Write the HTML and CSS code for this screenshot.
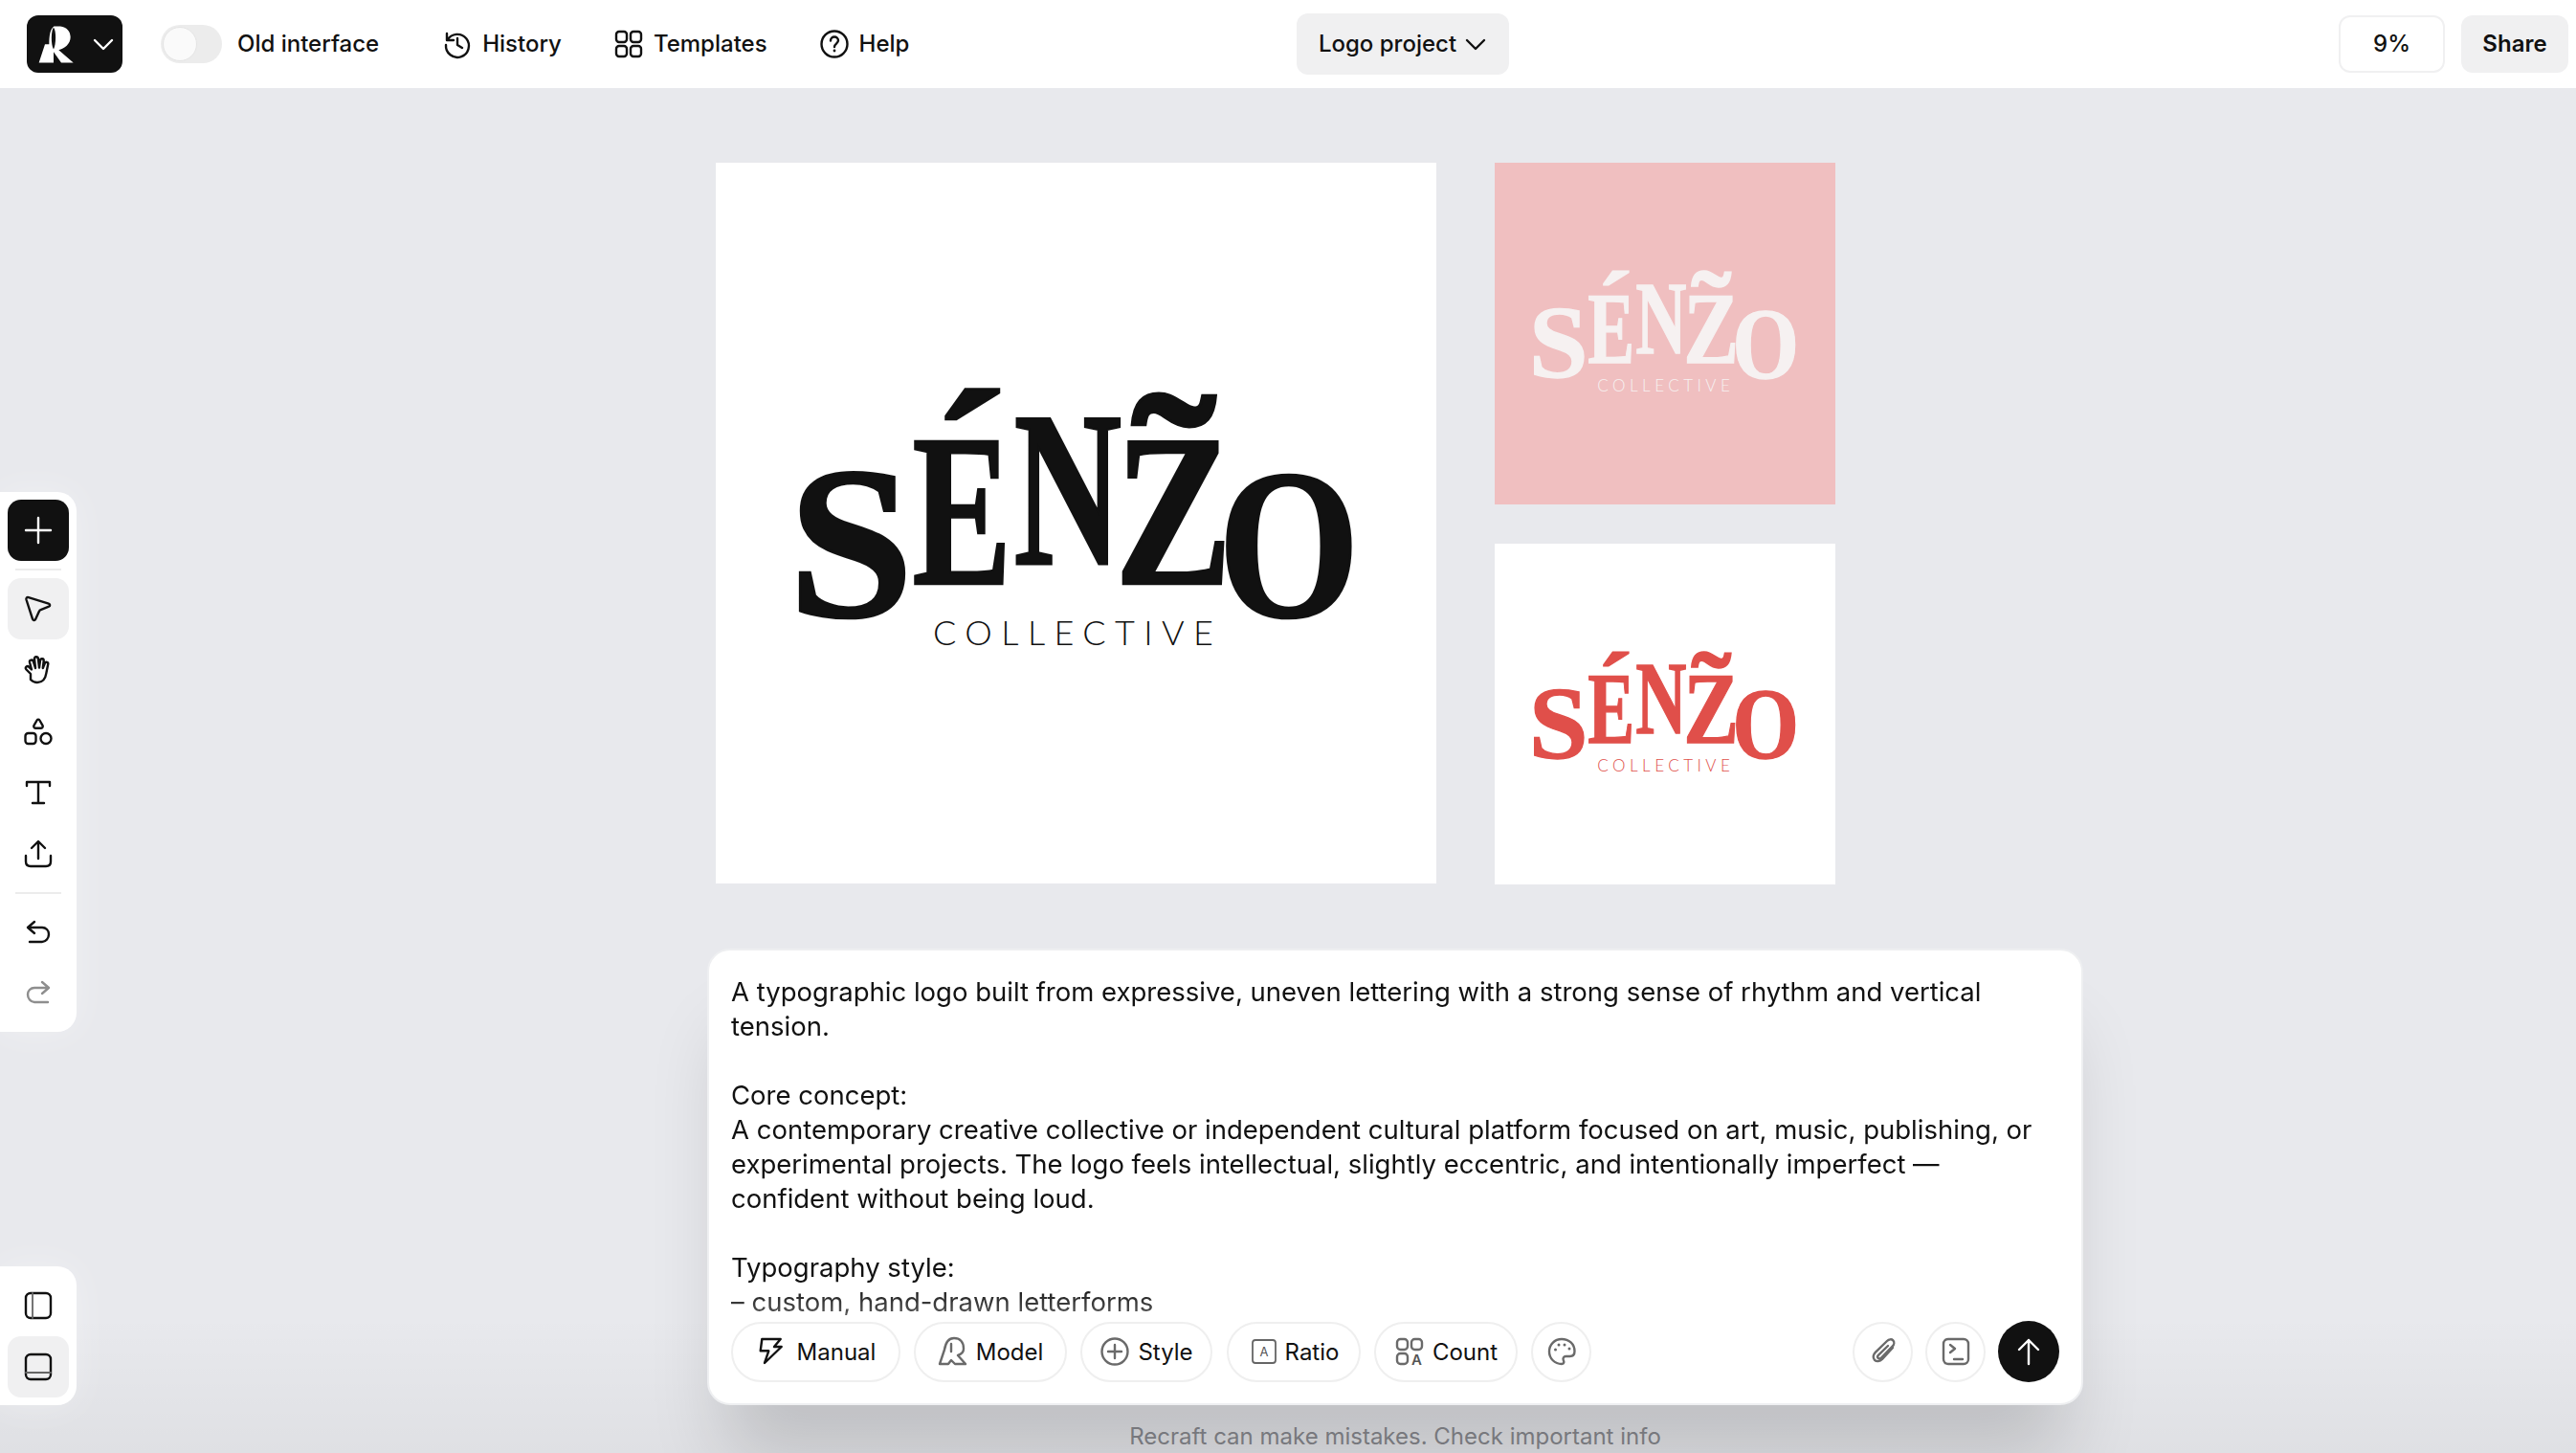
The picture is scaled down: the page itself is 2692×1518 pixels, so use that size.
FILE: index.html
```html
<!DOCTYPE html>
<html lang="en">
<head>
<meta charset="utf-8">
<title>Recraft – Logo project</title>
<link rel="stylesheet" href="styles.css">
</head>
<body>
<header class="topbar">
  <div class="top-left">
    <button class="brand">
      <svg class="brand-mark" viewBox="30 25 120 128"><path fill-rule="evenodd" d="M38 146 57 88H70C70 60 74 40 85 32H105C125 34 137 48 137 66 137 88 118 102 100 106L146 146H108L84 112V146ZM84 36C76 44 75 90 84 104 92 90 93 46 84 36Z" fill="#fff"/></svg>
      <svg class="ic-sm" viewBox="0 0 24 24"><path d="m3 8 9 9 9-9" class="st-w"/></svg>
    </button>
    <div class="toggle-wrap"><span class="toggle"><span class="knob"></span></span><span class="label">Old interface</span></div>
    <a class="nav"><svg class="ic" viewBox="0 0 32 32"><path d="M5 5v7h7M5.500 12A12 12 0 1 1 4 17M16 10v7l5 3" class="st"/></svg><span class="label">History</span></a>
    <a class="nav"><svg class="ic" viewBox="0 0 32 32"><rect x="3" y="3" width="11" height="11" rx="3" class="st"/><rect x="18" y="3" width="11" height="11" rx="3" class="st"/><rect x="3" y="18" width="11" height="11" rx="3" class="st"/><rect x="18" y="18" width="11" height="11" rx="3" class="st"/></svg><span class="label">Templates</span></a>
    <a class="nav"><svg class="ic" viewBox="0 0 32 32"><circle cx="16" cy="16" r="13.500" class="st"/><path d="M12 12.500c0-2.500 1.800-4 4-4s4 1.500 4 3.800c0 3.200-4 3.400-4 6.700" class="st"/><circle cx="16" cy="23" r="1.400" fill="#111"/></svg><span class="label">Help</span></a>
  </div>
  <button class="project"><span class="label">Logo project</span><svg class="ic-sm" viewBox="0 0 24 24"><path d="m3 8 9 9 9-9" class="st"/></svg></button>
  <div class="top-right">
    <button class="zoom"><span class="label">9%</span></button>
    <button class="share"><span class="label">Share</span></button>
  </div>
</header>

<main class="canvas">
  <div class="artboards">
    <div class="art art-main art-black">
      <svg class="logo" viewBox="748 170 753 753">
        <text class="lg" transform="matrix(2.354 0 0 2.265 823.800 643.700)">S</text>
        <text class="lg" transform="matrix(1.552 0 0 2.260 953.500 610)">E</text>
        <text class="lg" transform="matrix(2.500 0 0 2.108 971 554.300)">´</text>
        <text class="lg" transform="matrix(1.562 0 0 2.305 1059.500 589)">N</text>
        <text class="lg" transform="matrix(1.840 0 0 2.260 1165 610)">Z</text>
        <text class="lg" transform="matrix(2.640 0 0 2.362 1182.700 575.200)">˜</text>
        <text class="lg" transform="matrix(1.900 0 0 2.225 1273 643.800)">O</text>
        <text class="lg-sub" x="975" y="674" textLength="293" lengthAdjust="spacing">COLLECTIVE</text>
      </svg>
    </div>
    <div class="art-col">
      <div class="art art-small art-pink">
        <svg class="logo" viewBox="748 170 753 753">
          <text class="lg" transform="matrix(2.354 0 0 2.265 823.800 643.700)">S</text>
          <text class="lg" transform="matrix(1.552 0 0 2.260 953.500 610)">E</text>
          <text class="lg" transform="matrix(2.500 0 0 2.108 971 554.300)">´</text>
          <text class="lg" transform="matrix(1.562 0 0 2.305 1059.500 589)">N</text>
          <text class="lg" transform="matrix(1.840 0 0 2.260 1165 610)">Z</text>
          <text class="lg" transform="matrix(2.640 0 0 2.362 1182.700 575.200)">˜</text>
          <text class="lg" transform="matrix(1.900 0 0 2.225 1273 643.800)">O</text>
          <text class="lg-sub" x="975" y="674" textLength="293" lengthAdjust="spacing">COLLECTIVE</text>
        </svg>
      </div>
      <div class="art art-small art-red">
        <svg class="logo" viewBox="748 170 753 753">
          <text class="lg" transform="matrix(2.354 0 0 2.265 823.800 643.700)">S</text>
          <text class="lg" transform="matrix(1.552 0 0 2.260 953.500 610)">E</text>
          <text class="lg" transform="matrix(2.500 0 0 2.108 971 554.300)">´</text>
          <text class="lg" transform="matrix(1.562 0 0 2.305 1059.500 589)">N</text>
          <text class="lg" transform="matrix(1.840 0 0 2.260 1165 610)">Z</text>
          <text class="lg" transform="matrix(2.640 0 0 2.362 1182.700 575.200)">˜</text>
          <text class="lg" transform="matrix(1.900 0 0 2.225 1273 643.800)">O</text>
          <text class="lg-sub" x="975" y="674" textLength="293" lengthAdjust="spacing">COLLECTIVE</text>
        </svg>
      </div>
    </div>
  </div>

  <aside class="tools">
    <button class="tool tool-add"><svg class="ic" viewBox="0 0 32 32"><path d="M16 3v26M3 16h26" class="st-w"/></svg></button>
    <hr class="sep sep-a">
    <button class="tool tool-on"><svg class="ic" viewBox="0 0 32 32"><path d="M3.500 6.500c-.5-1.700.6-2.800 2.300-2.400l21 6.500c1.700.5 1.800 2.500.3 3.100l-8.600 3.500c-.8.300-1.200.7-1.500 1.400l-3.900 8.300c-.7 1.500-2.600 1.400-3.100-.2z" class="st"/></svg></button>
    <button class="tool"><svg class="ic" viewBox="0 0 32 32"><path d="M8 20 3.500 15.500c-1.800-2 .8-4.500 2.800-2.700L9 15.500 7 8c-.6-2.600 3-3.600 3.800-1L13 14l-1-9.500c-.3-2.800 3.500-3 3.900-.4L17 13.500 18 6c.4-2.600 4-2.200 3.700.5L20.800 14l2-5c.9-2.300 4-1.300 3.400 1.100l-1.800 9c-1 6.500-4.500 9.900-9.400 9.900-3 0-5-1-7-3z" class="st"/></svg></button>
    <button class="tool"><svg class="ic" viewBox="0 0 32 32"><path d="M14.600 4.500c.7-1.200 2.100-1.200 2.800 0l3.100 5.400c.7 1.300-.1 2.800-1.500 2.800h-6c-1.400 0-2.200-1.500-1.500-2.800z" class="st"/><rect x="2.500" y="18" width="11" height="11" rx="3" class="st"/><circle cx="24" cy="23.500" r="5.500" class="st"/></svg></button>
    <button class="tool"><svg class="ic" viewBox="0 0 32 32"><path d="M4 9V5h24v4M16 5v22M10 27h12" class="st"/></svg></button>
    <button class="tool"><svg class="ic" viewBox="0 0 32 32"><path d="M16 21V4M9 10l7-7 7 7M3 18v6c0 3 2 5 5 5h16c3 0 5-2 5-5v-6" class="st"/></svg></button>
    <hr class="sep sep-b">
    <button class="tool tool-hist"><svg class="ic" viewBox="0 0 32 32"><path d="M12 4 5 10l7 6M5 10h15c4 0 7 3 7 7s-3 8-7 8H7" class="st"/></svg></button>
    <button class="tool tool-hist"><svg class="ic" viewBox="0 0 32 32"><path d="m20 4 7 6-7 6M27 10H12c-4 0-7 3-7 7s3 8 7 8h14" class="st-l"/></svg></button>
  </aside>

  <aside class="views">
    <button class="tool"><svg class="ic" viewBox="0 0 32 32"><rect x="3" y="3" width="26" height="26" rx="5" class="st"/><path d="M10 3v26" class="st-t"/></svg></button>
    <button class="tool tool-on"><svg class="ic" viewBox="0 0 32 32"><rect x="3" y="3" width="26" height="26" rx="5" class="st"/><path d="M3 22h26" class="st-t"/></svg></button>
  </aside>

  <section class="prompt-wrap">
    <div class="prompt">
      <div class="prompt-text">
        <p>A typographic logo built from expressive, uneven lettering with a strong sense of rhythm and vertical tension.</p>
        <p>Core concept:<br>A contemporary creative collective or independent cultural platform focused on art, music, publishing, or experimental projects. The logo feels intellectual, slightly eccentric, and intentionally imperfect — confident without being loud.</p>
        <p>Typography style:<br>– custom, hand-drawn letterforms</p>
      </div>
      <div class="prompt-bar">
        <div class="chips">
          <button class="chip chip-manual"><svg class="ic" viewBox="0 0 32 32"><path d="M6.300 3H25.700L19 11H26.700L9 28 13.300 15.300H4.700Z" class="st"/></svg>Manual</button>
          <button class="chip chip-model"><svg class="ic" viewBox="0 0 32 32"><path d="M2 29 7 14C8 8 10 2 17 2c6 0 10 4 10 11 0 4-3 6-6 7l8 9H18l-4-4-3 4zM14 8v8" class="st-m"/></svg>Model</button>
          <button class="chip chip-style"><svg class="ic" viewBox="0 0 32 32"><circle cx="16" cy="16" r="13.500" class="st-m"/><path d="M16 9v14M9 16h14" class="st-m"/></svg>Style</button>
          <button class="chip chip-ratio"><svg class="ic" viewBox="0 0 32 32"><rect x="4" y="4" width="24" height="24" rx="3" class="st-t"/><text x="16" y="21" class="mini">A</text></svg>Ratio</button>
          <button class="chip chip-count"><svg class="ic" viewBox="0 0 32 32"><rect x="3" y="3" width="11" height="11" rx="3.500" class="st-m"/><rect x="18" y="3" width="11" height="11" rx="3.500" class="st-m"/><rect x="3" y="18" width="11" height="11" rx="3.500" class="st-m"/><text x="23.500" y="29.500" class="mini-b">A</text></svg>Count</button>
          <button class="chip chip-round"><svg class="ic" viewBox="0 0 32 32"><path d="M16 3C8.500 3 3 8.800 3 16c0 7.300 5.800 13 13 13 3 0 2.500-2.500 1.800-4-.8-2 .2-4 2.500-4h4.200c3 0 5-2 5-5.200C29.500 8 23.500 3 16 3z" class="st-m"/><circle cx="9.500" cy="14" r="1.500" fill="#666"/><circle cx="13" cy="9" r="1.500" fill="#666"/><circle cx="19" cy="9" r="1.500" fill="#666"/><circle cx="24" cy="13" r="1.500" fill="#666"/></svg></button>
        </div>
        <div class="actions">
          <button class="chip chip-round"><svg class="ic" viewBox="0 0 32 32"><path d="M26 12 15 24c-2.500 2.500-6 2.800-8 .8s-1.700-5.500.8-8L20 5c2-2 4.800-2.200 6.300-.7s1.300 4.300-.7 6.300L14 22.500c-1 1-2.500 1.200-3.300.4s-.6-2.300.4-3.300L21 10" class="st-m"/></svg></button>
          <button class="chip chip-round"><svg class="ic" viewBox="0 0 32 32"><rect x="3" y="3" width="26" height="26" rx="5" class="st-m"/><path d="m10 9 5 4-5 4M14 24h9" class="st-m"/></svg></button>
          <button class="send"><svg class="ic" viewBox="0 0 32 32"><path d="M16 29V4M6 14 16 4l10 10" class="st-w"/></svg></button>
        </div>
      </div>
    </div>
    <p class="disclaimer">Recraft can make mistakes. Check important info</p>
  </section>
</main>
</body>
</html>
```
FILE: styles.css
```css
* { box-sizing: border-box; }
html, body { margin: 0; height: 100%; }
body {
  width: 2692px; height: 1518px; overflow: hidden;
  display: flex; flex-direction: column;
  font-family: Inter, "Liberation Sans", sans-serif;
  color: #111;
  background: #e8e9ed;
}
button { font: inherit; color: inherit; border: 0; padding: 0; background: none; }
svg { display: block; flex: none; }
.ic { width: 32px; height: 32px; overflow: visible; }
.ic-sm { width: 24px; height: 24px; }
.st, .st-w, .st-m, .st-t, .st-l { fill: none; stroke-width: 2.400; stroke-linecap: round; stroke-linejoin: round; }
.st { stroke: #111; }
.st-w { stroke: #fff; }
.st-m { stroke: #6a6a6a; }
.st-l { stroke: #8e8e8e; }
.st-t { stroke: #666; stroke-width: 1.800; }

/* top bar */
.topbar {
  flex: none; height: 92px; background: #fff;
  display: grid; grid-template-columns: 1327px auto 1fr; align-items: center;
  padding: 0 8px 0 28px;
  font-size: 24px; font-weight: 500;
}
.label { display: block; padding-bottom: 2px; }
.top-left { display: flex; align-items: center; }
.top-right { display: flex; justify-content: flex-end; gap: 17px; }
.brand {
  width: 100px; height: 60px; background: #111; border-radius: 12px;
  display: flex; align-items: center; padding-left: 10px; gap: 18px;
}
.brand-mark { width: 40px; height: 43px; }
.toggle-wrap { display: flex; align-items: center; gap: 16px; margin-left: 40px; }
.toggle { width: 64px; height: 40px; border-radius: 20px; background: #ececec; display: block; padding: 2px; }
.knob { display: block; width: 36px; height: 36px; border-radius: 50%; background: #fafafa; border: 1px solid #e4e4e4; }
.nav { display: flex; align-items: center; gap: 10px; margin-left: 66px; }
.nav + .nav { margin-left: 54px; }
.project {
  width: 222px; height: 64px; background: #f0f0f1; border-radius: 12px;
  display: flex; align-items: center; justify-content: center; gap: 8px;
}
.zoom, .share { height: 60px; border-radius: 12px; }
.zoom { width: 111px; border: 2px solid #f0f0f1; }
.share { width: 112px; background: #f0f0f1; font-weight: 600; }

/* canvas */
.canvas {
  flex: 1; position: relative; overflow: hidden;
  background: linear-gradient(to bottom, rgba(0,0,0,0) 90%, rgba(0,0,0,.04) 100%), #e8e9ed;
  padding: 78px 0 0 748px;
}
.artboards { display: flex; gap: 61px; align-items: stretch; }
.art-col { display: flex; flex-direction: column; gap: 41px; }
.art { overflow: hidden; }
.art-main { width: 753px; height: 753px; background: #fff; }
.art-small { width: 356px; }
.logo { width: 100%; height: 100%; }
.lg { font-family: "Liberation Serif", serif; font-weight: 700; font-size: 100px; stroke-width: 1.200; }
.lg-sub { font-family: Lato, "Liberation Sans", sans-serif; font-weight: 300; font-size: 36px; }
.art-black .lg { fill: #111; stroke: #111; }
.art-black .lg-sub { fill: #111; }
.art-pink { height: 357px; flex: none; background: #f0bfc0; }
.art-pink .lg { fill: #f6f1f1; stroke: #f6f1f1; }
.art-pink .lg-sub { fill: #f6f1f1; }
.art-red { flex: 1; min-height: 0; background: #fff; }
.art-red .lg { fill: #e04f4a; stroke: #e04f4a; }
.art-red .lg-sub { fill: #e04f4a; }

/* tool panels */
.tools, .views {
  position: absolute; left: 0; width: 80px; background: #fff; border-radius: 0 20px 20px 0;
  display: flex; flex-direction: column; align-items: center; padding: 8px;
  box-shadow: 0 0 40px rgba(255,255,255,.35);
}
.tools { top: 422px; height: 564px; }
.views { top: 1231px; height: 145px; padding-top: 9px; }
.tool { width: 64px; height: 64px; flex: none; border-radius: 14px; display: flex; align-items: center; justify-content: center; }
.tool-add { background: #111; }
.tool-on { background: #f0f0f1; }
.tool-hist { height: 63px; }
.sep { width: 48px; height: 2px; border: 0; margin: 0; background: #ececec; flex: none; }
.sep-a { margin: 8px 0; }
.sep-b { margin: 8px 0 9px; }

/* prompt */
.prompt-wrap { position: absolute; left: 739px; bottom: 0; width: 1438px; display: flex; flex-direction: column; align-items: stretch; }
.prompt {
  height: 477px; background: #fff; border-radius: 24px; border: 2px solid #eeeff1;
  padding: 25px 23px 22px 23px; display: flex; flex-direction: column;
  box-shadow: 0 70px 80px -20px rgba(0,0,0,.16);
}
.prompt-text {
  flex: 1; overflow: hidden; font-size: 27.500px; line-height: 36px; font-weight: 400; min-height: 0;
  margin-bottom: 6px;
  -webkit-mask-image: linear-gradient(to bottom, #000 calc(100% - 30px), rgba(0,0,0,.7));
  mask-image: linear-gradient(to bottom, #000 calc(100% - 30px), rgba(0,0,0,.7));
}
.prompt-text p { margin: 0 0 36px; }
.prompt-bar { flex: none; display: flex; justify-content: space-between; align-items: center; height: 64px; font-size: 24px; font-weight: 400; }
.chips, .actions { display: flex; align-items: center; }
.chips { gap: 14px; }
.actions { gap: 13px; }
.chip {
  height: 63px; border-radius: 32px; border: 2px solid #efefef; background: #fff;
  display: flex; align-items: center; justify-content: center; gap: 8px; flex: none;
}
.chip-manual { width: 177px; gap: 11px; }
.chip-model { width: 160px; gap: 8px; }
.chip-style { width: 138px; }
.chip-ratio { width: 140px; margin-left: 1px; gap: 6px; }
.chip-count { width: 150px; }
.chip-round { width: 63px; }
.send { width: 64px; height: 64px; border-radius: 50%; background: #111; display: flex; align-items: center; justify-content: center; flex: none; }
.mini { font-size: 13px; fill: #555; text-anchor: middle; font-family: Inter, sans-serif; }
.mini-b { font-size: 15px; font-weight: 600; fill: #555; text-anchor: middle; font-family: Inter, sans-serif; }
.disclaimer { margin: 0; height: 50px; line-height: 66px; text-align: center; font-size: 24px; color: #77787d; }
```
